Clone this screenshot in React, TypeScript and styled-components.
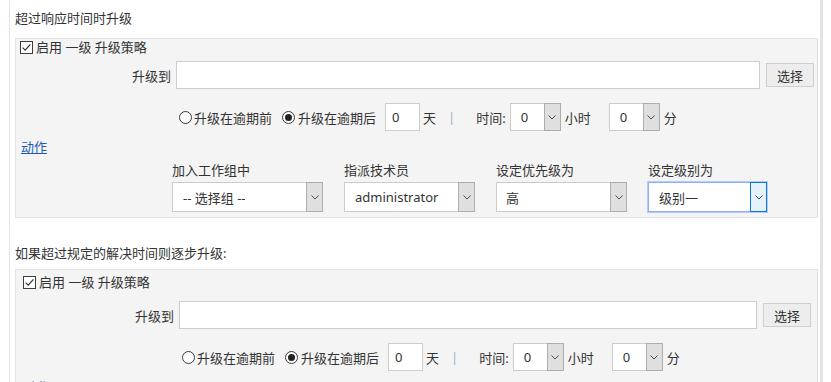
import React from 'react';
import styled, { createGlobalStyle } from 'styled-components';

const Global = createGlobalStyle`
  html, body { margin: 0; padding: 0; background: #fff; }
  body {
    font-family: "Noto Sans", "Noto Sans CJK SC", sans-serif;
    font-size: 13px;
    color: #333;
  }
  * { box-sizing: border-box; }
`;

const Page = styled.div`
  margin-left: 9px;
  width: 814px;
  min-height: 100vh;
  border-left: 1px solid #e4e4e4;
  border-right: 3px solid #e3e3e3;
  padding: 0 2px 0 5px;
`;

const SectionTitle = styled.div<{ $mt: number; $mb: number }>`
  margin-top: ${(p) => p.$mt}px;
  margin-bottom: ${(p) => p.$mb}px;
  line-height: 20px;
  height: 20px;
  color: #333;
`;

const Panel = styled.div<{ $pt: number; $inset: number }>`
  background: #f4f4f4;
  border: 1px solid #e3e3e3;
  padding: ${(p) => p.$pt}px ${(p) => p.$inset}px 5px;
`;

const CheckRow = styled.label`
  display: flex;
  align-items: center;
  gap: 3px;
  height: 17px;
  padding-left: 4px;
  line-height: 17px;
`;

const UpgradeRow = styled.div<{ $mt: number }>`
  display: grid;
  grid-template-columns: 154px 1fr 48px;
  align-items: center;
  column-gap: 6px;
  margin-top: ${(p) => p.$mt}px;
  padding-right: 3px;
  height: 28px;
`;

const FieldLabel = styled.span`
  text-align: right;
  margin-right: -1px;
`;

const TextInput = styled.input`
  height: 28px;
  width: 100%;
  border: 1px solid #cdcdcd;
  background: #fff;
  font: inherit;
  padding: 0 6px;
  outline: none;
`;

const PickButton = styled.button`
  height: 24px;
  width: 48px;
  border: 1px solid #cfcfcf;
  background: #ededed;
  font: inherit;
  color: #333;
  padding: 0;
  cursor: pointer;
`;

const RadioRow = styled.div`
  display: flex;
  align-items: center;
  margin-top: 14px;
  height: 28px;
  padding-left: 163px;
`;

const RadioOpt = styled.label<{ $ml?: number; $gap: number }>`
  display: flex;
  align-items: center;
  gap: ${(p) => p.$gap}px;
  margin-left: ${(p) => p.$ml ?? 0}px;
`;

const RadioCircle = styled.span<{ $on?: boolean }>`
  width: 13px;
  height: 13px;
  border-radius: 50%;
  border: 1px solid #3a3a3a;
  background: #fff;
  display: flex;
  align-items: center;
  justify-content: center;
  &::after {
    content: '';
    width: 7px;
    height: 7px;
    border-radius: 50%;
    background: ${(p) => (p.$on ? '#222' : 'transparent')};
  }
`;

const DayInput = styled.input`
  width: 35px;
  height: 28px;
  margin-left: 9px;
  border: 1px solid #cdcdcd;
  background: #fff;
  font: inherit;
  color: #333;
  padding: 0 6px;
  outline: none;
`;

const Unit = styled.span<{ $ml: number }>`
  margin-left: ${(p) => p.$ml}px;
  white-space: nowrap;
`;

const Sep = styled.span`
  margin-left: 12px;
  color: #9db0c6;
`;

const ActionLink = styled.a`
  display: block;
  margin-top: 8px;
  margin-left: 5px;
  line-height: 16px;
  height: 16px;
  color: #1f5bb4;
  text-decoration: underline;
  width: max-content;
`;

const ActionGrid = styled.div`
  display: flex;
  gap: 21px;
  margin-top: 7px;
  padding-left: 156px;
`;

const ActionField = styled.div<{ $w: number }>`
  display: flex;
  flex-direction: column;
  gap: 4px;
  width: ${(p) => p.$w}px;
`;

const ActionLabel = styled.span`
  line-height: 16px;
  height: 16px;
`;

const SelectBox = styled.div<{ $w?: number; $h: number; $ml?: number; $focus?: boolean }>`
  display: flex;
  align-items: center;
  width: ${(p) => (p.$w ? `${p.$w}px` : '100%')};
  height: ${(p) => p.$h}px;
  margin-left: ${(p) => p.$ml ?? 0}px;
  background: #fff;
  border: 1px solid ${(p) => (p.$focus ? '#8fb0f2' : '#cbcbcb')};
  box-shadow: ${(p) => (p.$focus ? '0 0 0 1px #b7cbf9' : 'none')};
  flex-shrink: 0;
`;

const SelectText = styled.span<{ $pl: number }>`
  flex: 1;
  padding-left: ${(p) => p.$pl}px;
  white-space: nowrap;
  overflow: hidden;
  color: #333;
`;

const SelectArrow = styled.span<{ $focus?: boolean }>`
  align-self: stretch;
  width: 17px;
  margin: -1px -1px -1px 0;
  border: 1px solid ${(p) => (p.$focus ? '#0a78d6' : '#adadad')};
  background: ${(p) => (p.$focus ? '#e5f1fb' : '#dfdfdf')};
  display: flex;
  align-items: center;
  justify-content: center;
`;

const Chevron = () => (
  <svg width="8" height="5" viewBox="0 0 8 5">
    <polyline points="0.5,0.5 4,4 7.5,0.5" fill="none" stroke="#4a4a4a" strokeWidth="1" />
  </svg>
);

const CheckIcon = () => (
  <svg width="13" height="13" viewBox="0 0 13 13">
    <rect x="0.5" y="0.5" width="12" height="12" fill="#fff" stroke="#3d3d3d" />
    <polyline points="2.6,6.6 5.2,9.2 10.4,3.4" fill="none" stroke="#333" strokeWidth="1.2" />
  </svg>
);

type SelProps = { text: string; w?: number; h: number; ml?: number; pl?: number; focus?: boolean };

const Select = ({ text, w, h, ml, pl = 10, focus }: SelProps) => (
  <SelectBox $w={w} $h={h} $ml={ml} $focus={focus}>
    <SelectText $pl={pl}>{text}</SelectText>
    <SelectArrow $focus={focus}>
      <Chevron />
    </SelectArrow>
  </SelectBox>
);

type PolicyProps = { pt: number; inset: number; upMt: number };

const Policy = ({ pt, inset, upMt }: PolicyProps) => (
  <Panel $pt={pt} $inset={inset}>
    <CheckRow>
      <CheckIcon />
      <span>启用 一级 升级策略</span>
    </CheckRow>
    <UpgradeRow $mt={upMt}>
      <FieldLabel>升级到</FieldLabel>
      <TextInput />
      <PickButton>选择</PickButton>
    </UpgradeRow>
    <RadioRow>
      <RadioOpt $gap={2}>
        <RadioCircle />
        <span>升级在逾期前</span>
      </RadioOpt>
      <RadioOpt $ml={10} $gap={3}>
        <RadioCircle $on />
        <span>升级在逾期后</span>
      </RadioOpt>
      <DayInput defaultValue="0" />
      <Unit $ml={3}>天</Unit>
      <Sep>|</Sep>
      <Unit $ml={21}>时间:</Unit>
      <Select text="0" w={51} h={28} ml={4} />
      <Unit $ml={4}>小时</Unit>
      <Select text="0" w={51} h={28} ml={18} />
      <Unit $ml={4}>分</Unit>
    </RadioRow>
    <ActionLink href="#">动作</ActionLink>
    <ActionGrid>
      <ActionField $w={151}>
        <ActionLabel>加入工作组中</ActionLabel>
        <Select text="-- 选择组 --" h={30} />
      </ActionField>
      <ActionField $w={131}>
        <ActionLabel>指派技术员</ActionLabel>
        <Select text="administrator" h={30} />
      </ActionField>
      <ActionField $w={131}>
        <ActionLabel>设定优先级为</ActionLabel>
        <Select text="高" h={30} pl={9} />
      </ActionField>
      <ActionField $w={119}>
        <ActionLabel>设定级别为</ActionLabel>
        <Select text="级别一" h={30} focus />
      </ActionField>
    </ActionGrid>
  </Panel>
);

export default function App() {
  return (
    <>
      <Global />
      <Page>
        <div style={{ height: 8 }} />
        <SectionTitle $mt={0} $mb={10}>超过响应时间时升级</SectionTitle>
        <Policy pt={0} inset={0} upMt={5} />
        <SectionTitle $mt={25} $mb={6}>如果超过规定的解决时间则逐步升级:</SectionTitle>
        <Policy pt={4} inset={3} upMt={10} />
      </Page>
    </>
  );
}
